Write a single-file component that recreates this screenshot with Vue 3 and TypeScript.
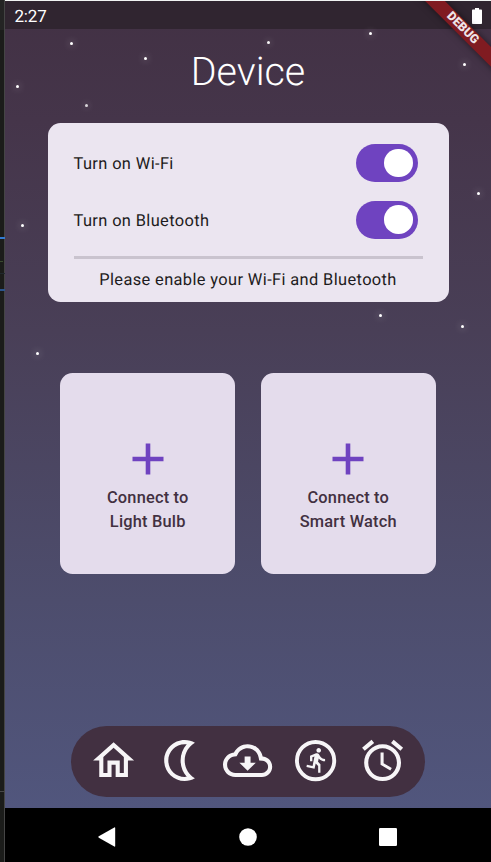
<script setup lang="ts">
import { reactive } from 'vue'

interface Toggle { label: string; on: boolean }
const toggles = reactive<Toggle[]>([
  { label: 'Turn on Wi-Fi', on: true },
  { label: 'Turn on Bluetooth', on: true },
])

const devices: string[][] = [
  ['Connect to', 'Light Bulb'],
  ['Connect to', 'Smart Watch'],
]

const stars: [number, number, number][] = [
  [71.8, 43.5, 1], [145.3, 58, 1], [17.3, 86, 1], [86.2, 105, 0.8],
  [268.6, 42, 0.95], [370.3, 33.6, 1], [464.3, 64, 1], [22.5, 225, 1],
  [478.6, 193, 1], [380.8, 315, 1], [462.7, 326.5, 1], [37, 353.7, 1],
]

const tabs: { name: string; d: string }[] = [
  { name: 'Home', d: 'M12 5.69l5 4.5V18h-2v-6H9v6H7v-7.81l5-4.5M12 3L2 12h3v8h6v-6h2v6h6v-8h3L12 3z' },
  { name: 'Sleep', d: 'M14 4c.34 0 .68.02 1.01.07C13.1 6.23 12 9.05 12 12s1.1 5.77 3.01 7.93c-.33.05-.67.07-1.01.07-4.41 0-8-3.59-8-8s3.59-8 8-8m0-2C8.48 2 4 6.48 4 12s4.48 10 10 10c1.82 0 3.53-.5 5-1.35-2.99-1.73-5-4.95-5-8.65s2.01-6.92 5-8.65C17.53 2.5 15.82 2 14 2z' },
  { name: 'Download', d: 'M19.35 10.04C18.67 6.59 15.64 4 12 4 9.11 4 6.6 5.64 5.35 8.04 2.34 8.36 0 10.91 0 14c0 3.31 2.69 6 6 6h13c2.76 0 5-2.24 5-5 0-2.64-2.05-4.78-4.65-4.96zM19 18H6c-2.21 0-4-1.79-4-4 0-2.05 1.53-3.76 3.56-3.97l1.07-.11.5-.95C8.08 7.14 9.94 6 12 6c2.62 0 4.88 1.86 5.39 4.43l.3 1.5 1.53.11c1.56.1 2.78 1.41 2.78 2.96 0 1.65-1.35 3-3 3zm-5.55-8h-2.9v3H8l4 4 4-4h-2.55z' },
  { name: 'Activity', d: '' },
  { name: 'Alarm', d: 'M22 5.72l-4.6-3.86-1.29 1.53 4.6 3.86L22 5.72zM7.88 3.39L6.6 1.86 2 5.71l1.29 1.53 4.59-3.85zM12.5 8H11v6l4.75 2.85.75-1.23-4-2.37V8zM12 4c-4.97 0-9 4.03-9 9s4.02 9 9 9c4.97 0 9-4.03 9-9s-4.03-9-9-9zm0 16c-3.87 0-7-3.13-7-7s3.13-7 7-7 7 3.13 7 7-3.13 7-7 7z' },
]
</script>

<template>
  <div class="desk">
    <div class="gutter">
      <i class="mark m1"></i><i class="mark m2"></i><i class="mark m3"></i><i class="mark m4"></i><i class="mark m5"></i>
    </div>
    <div class="phone">
      <header class="status">
        <span class="clock">2:27</span>
        <svg class="battery" viewBox="0 0 10 16"><path d="M3 0h4v1.6h2.2q.8 0 .8.8v12.8q0 .8-.8.8H.8q-.8 0-.8-.8V2.4q0-.8.8-.8H3z" /></svg>
      </header>
      <main class="screen">
        <h1 class="title">Device</h1>
        <section class="panel">
          <div v-for="t in toggles" :key="t.label" class="row">
            <span class="label">{{ t.label }}</span>
            <button class="switch" :class="{ on: t.on }" @click="t.on = !t.on"><i class="knob"></i></button>
          </div>
          <hr class="rule" />
          <p class="hint">Please enable your Wi-Fi and Bluetooth</p>
        </section>
        <section class="cards">
          <button v-for="d in devices" :key="d[1]" class="card">
            <svg class="plus" viewBox="0 0 32 32"><path d="M13.7 0.5h4.6v13.2h13.2v4.6h-13.2v13.2h-4.6v-13.2h-13.2v-4.6h13.2z" /></svg>
            <span v-for="line in d" :key="line" class="line">{{ line }}</span>
          </button>
        </section>
        <nav class="tabs">
          <svg v-for="t in tabs" :key="t.name" class="tab" viewBox="0 0 24 24">
            <path v-if="t.d" :d="t.d" />
            <template v-else>
              <circle class="ring" cx="12" cy="12" r="9.1" />
              <path transform="translate(5.9 5) scale(.565)" d="M13.49 5.48c1.1 0 2-.9 2-2s-.9-2-2-2-2 .9-2 2 .9 2 2 2zm-3.6 13.9l1-4.4 2.1 2v6h2v-7.5l-2.1-2 .6-3c1.3 1.5 3.3 2.5 5.5 2.5v-2c-1.9 0-3.5-1-4.3-2.4l-1-1.6c-.4-.6-1-1-1.7-1-.3 0-.5.1-.8.1l-5.2 2.2v4.7h2v-3.4l1.8-.7-1.6 8.1-4.9-1-.4 2 7 1.4z" />
            </template>
          </svg>
        </nav>
      </main>
      <footer class="system">
        <svg class="sys" viewBox="0 0 20 20"><path d="M.8 9.3 16.3 .4q.9-.4.9.6v18q0 1-.9.6L.8 10.7q-1-.7 0-1.4z" /></svg>
        <svg class="sys" viewBox="0 0 20 20"><circle cx="10" cy="10" r="8.8" /></svg>
        <svg class="sys" viewBox="0 0 20 20"><rect x="1" y="1" width="18" height="18" rx="1.2" /></svg>
      </footer>
      <div class="corner"><div class="ribbon">DEBUG</div></div>
    </div>
    <i v-for="([x, y, o], n) in stars" :key="n" class="star" :style="{ left: x + 'px', top: y + 'px', opacity: o }"></i>
  </div>
</template>

<style>
body { margin: 0; background: #1d1d1d; }
</style>

<style scoped>
.desk { position: relative; display: flex; width: 491px; height: 862px; overflow: hidden; background: #1d1d1d; font-family: Roboto, "Liberation Sans", sans-serif; text-rendering: geometricPrecision; }
.gutter { position: relative; flex: none; box-sizing: border-box; width: 5px; background: linear-gradient(#242424 30px, #1b1c1a 30px); border-right: 1px solid #454545; }
.mark { position: absolute; left: 0; width: 5px; height: 2px; }
.m1 { top: 237px; background: #327bd3; }
.m2 { top: 261px; width: 3px; height: 1px; background: #3b4a30; }
.m3 { top: 273px; height: 1px; background: #20282d; }
.m4 { top: 289px; background: #2b548c; }
.m5 { top: 791px; height: 1px; background: #484848; }
.phone { position: relative; flex: 1; display: flex; flex-direction: column; box-sizing: border-box; border-top: 1px solid #f1f4f3; background: linear-gradient(#423144 0, #45354a 120px, #493f57 330px, #4d4d6d 600px, #51567d 807px); overflow: hidden; }
.status { flex: none; display: flex; justify-content: space-between; align-items: center; box-sizing: border-box; height: 28px; padding: 1px 9px 0 9.5px; background: #302530; color: #fff; }
.clock { padding-top: 2px; font-size: 17px; line-height: 20px; letter-spacing: -.2px; }
.battery { width: 10px; height: 16px; fill: #fff; }
.screen { flex: 1; display: flex; flex-direction: column; align-items: center; }
.title { margin: 18px 0 0; height: 50px; font-size: 39.4px; line-height: 50px; font-weight: 300; color: #fff; letter-spacing: 0; }
.panel { box-sizing: border-box; width: 401px; height: 179.5px; margin-top: 25.5px; padding: 12px 26px 0; border-radius: 12.5px; background: #ebe5f0; color: #1d1b20; font-size: 16.4px; letter-spacing: .38px; }
.row { display: flex; align-items: center; justify-content: space-between; height: 56.8px; }
.label { padding-top: 3px; }
.switch { box-sizing: border-box; display: flex; align-items: center; width: 62px; height: 38px; margin-right: 4.5px; padding: 0 5px; border: 0; border-radius: 19px; background: #948c9c; }
.switch.on { justify-content: flex-end; background: #6f43c0; }
.knob { width: 28.6px; height: 28.6px; border-radius: 50%; background: #fff; }
.rule { height: 2.5px; margin: 8px 0 0; border: 0; background: #c9c3ce; }
.hint { margin: 12.5px 0 0; line-height: 20px; text-align: center; white-space: nowrap; }
.cards { display: flex; gap: 25.5px; margin-top: 71px; }
.card { display: flex; flex-direction: column; align-items: center; box-sizing: border-box; width: 175px; height: 201px; padding: 69.5px 0 0; border: 0; border-radius: 12.5px; background: #e4dcec; color: #423041; font: 500 16.4px/23.7px Roboto, "Liberation Sans", sans-serif; letter-spacing: .2px; }
.plus { width: 32px; height: 32px; margin-bottom: 11.7px; fill: #6f43c0; }
.line { display: block; }
.tabs { display: flex; align-items: center; justify-content: center; gap: 18.2px; box-sizing: border-box; width: 354px; height: 71px; margin-top: auto; margin-bottom: 11.5px; border-radius: 36px; background: #423041; }
.tab { width: 49.2px; height: 49.2px; fill: #f7f5f7; }
.ring { fill: none; stroke: #f7f5f7; stroke-width: 1.9; }
.system { flex: none; display: flex; align-items: center; justify-content: center; gap: 120px; height: 54px; background: #000; }
.sys { width: 20px; height: 20px; margin-top: 3px; fill: #fff; }
.corner { position: absolute; top: 0; right: 0; width: 90px; height: 90px; overflow: hidden; }
.ribbon { position: absolute; left: 2px; top: 21px; width: 120px; height: 14.2px; box-sizing: border-box; padding-right: 2px; background: #801b21; box-shadow: 0 0 7px rgba(0, 0, 0, .5); color: #eee5e8; font-size: 12.3px; line-height: 14.5px; font-weight: 900; text-align: center; transform: rotate(45deg); }
.star { position: absolute; width: 3px; height: 3px; margin: -1.5px; border-radius: 50%; background: #fff; box-shadow: 0 0 7px 2px rgba(255, 255, 255, .13); }
</style>
